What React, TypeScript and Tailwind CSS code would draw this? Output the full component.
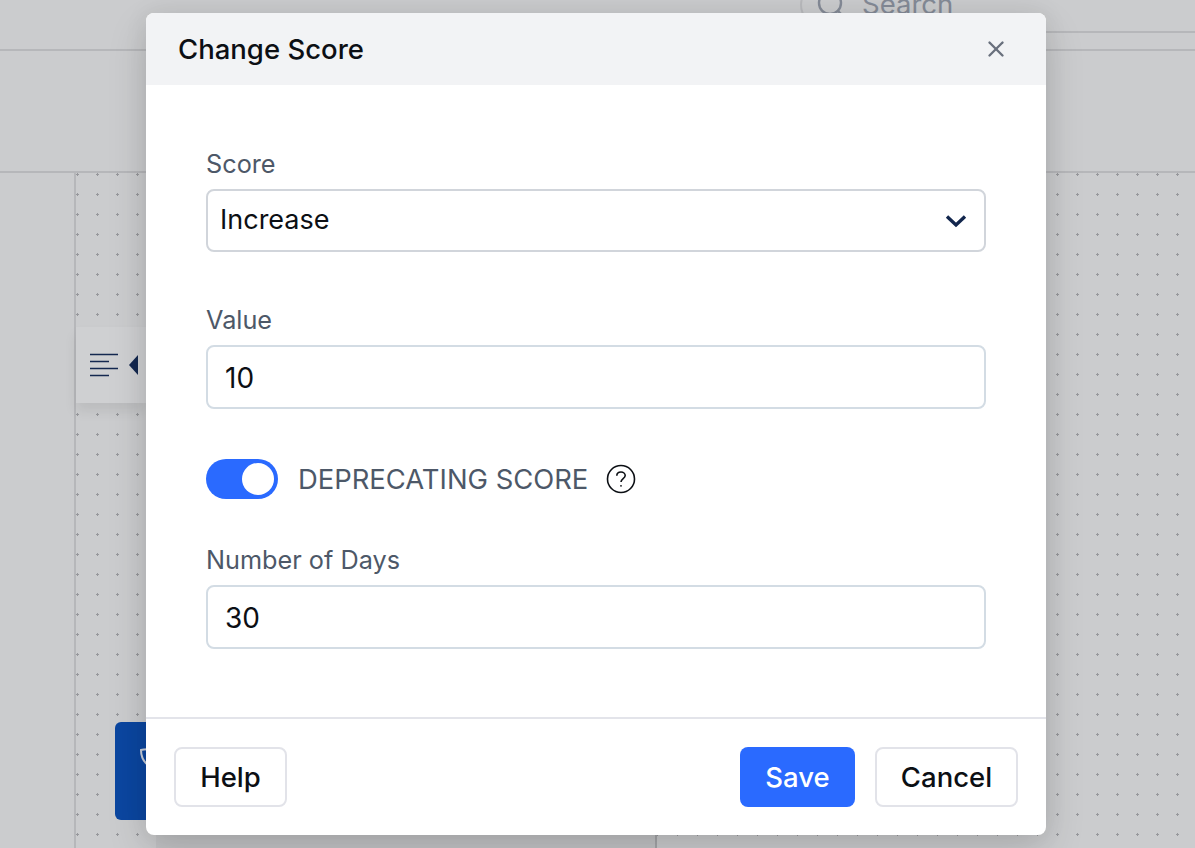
import React from "react";
import { X } from "lucide-react";

function Field({ label, value }: { label: string; value: string }) {
  return (
    <div className="flex flex-col">
      <label className="h-[34px] text-[25.25px] leading-[34px] text-[#4d5868]">{label}</label>
      <input
        readOnly
        defaultValue={value}
        className="mt-2 h-[64px] w-full rounded-lg border-2 border-[#d3dce4] bg-white pl-[17px] pt-[1px] text-[28px] text-[#0c0f14] outline-none"
      />
    </div>
  );
}

function OutlineButton({ label, width }: { label: string; width: string }) {
  return (
    <button className={`h-[60px] ${width} rounded-lg border-2 border-[#e2e3e9] bg-white pt-[1px] text-[27.5px] font-[450] text-[#0c0f14]`}>
      {label}
    </button>
  );
}

export default function App() {
  return (
    <div className="relative h-[848px] w-full overflow-hidden bg-[#cbccce] font-['Inter',sans-serif]">
      {/* page behind the dialog */}
      <div className="flex h-[848px] flex-col">
        <div className="h-[51px] shrink-0 border-b-2 border-[#b6b7ba]">
          <div className="ml-auto h-[33px] w-[395px] border-b-2 border-[#b6b7ba]" />
        </div>
        <div className="h-[122px] shrink-0 border-b-2 border-[#b6b7ba]" />
        <div className="flex min-h-0 flex-1">
          <div className="w-[76px] shrink-0 border-r-2 border-[#b6b7ba]" />
          <div className="relative flex-1 bg-[radial-gradient(circle_at_1.5px_1.5px,#97989c_1px,transparent_1.1px)] bg-[size:20px_20px]">
            <div className="mt-[154px] flex h-[76px] w-[70px] items-center gap-[10px] bg-[#cfd0d2] pl-[13px] shadow-[0_8px_12px_rgba(0,0,0,0.08)]">
              <svg width="30" height="24" viewBox="0 0 30 24" fill="none" stroke="#142850" strokeWidth="1.4">
                <path d="M1 1.5H29M1 8.5H20M1 15.5H29M1 22.5H20" />
              </svg>
              <svg width="9" height="20" viewBox="0 0 9 20" fill="#142850">
                <path d="M9 0V20L0 10Z" />
              </svg>
            </div>
            <div className="ml-[39px] mt-[319px] flex h-[98px] w-[90px] rounded-md bg-[#0b46a0] pl-[25px] pt-[26px]">
              <svg width="16" height="18" viewBox="0 0 16 18" fill="none" stroke="#c9cfdb" strokeWidth="2">
                <path d="M1 2C4 1 12 1 15 2C15 9 12 14 8 17C4 14 1 9 1 2Z" />
              </svg>
            </div>
          </div>
        </div>
      </div>

      {/* bottom panel edge peeking out under the dialog */}
      <div className="absolute left-[156px] top-[800px] h-[48px] w-[501px] border-r-2 border-[#a5a6a9] bg-[#c3c4c6]" />

      {/* search box clipped by the dialog */}
      <div className="absolute left-[800px] top-[-17px] flex h-[44px] w-[240px] items-center gap-[15px] rounded-l-full border-2 border-r-0 border-[#b9babd] pl-[15px] text-[#858b97]">
        <svg width="30" height="30" viewBox="0 0 30 30" fill="none" stroke="currentColor" strokeWidth="2.4">
          <circle cx="13" cy="13" r="11" />
          <path d="M21 21L29 29" />
        </svg>
        <span className="text-[27.5px]">Search</span>
      </div>

      {/* dialog */}
      <div className="absolute left-[146px] top-[13px] flex h-[822px] w-[900px] flex-col overflow-hidden rounded-lg bg-white shadow-[0_16px_40px_rgba(0,0,0,0.14),0_0_24px_rgba(0,0,0,0.07)]">
        <div className="flex h-[72px] shrink-0 items-center justify-between bg-[#f2f3f5] pl-[32px] pr-[37px]">
          <h2 className="pt-[2px] text-[27.5px] font-medium text-[#0c0f14]">Change Score</h2>
          <X size={26} strokeWidth={2.2} className="text-[#69707d]" />
        </div>

        <div className="flex-1 px-[60px] pt-[62px]">
          <div className="flex flex-col">
            <label className="h-[34px] text-[25.25px] leading-[34px] text-[#4d5868]">Score</label>
            <div className="relative mt-2 h-[63px] w-full">
              <select
                defaultValue="Increase"
                className="h-full w-full appearance-none rounded-lg border-2 border-[#d1d5db] bg-white pl-3 text-[27px] text-[#0c0f14] outline-none"
              >
                <option>Increase</option>
              </select>
              <svg
                className="absolute right-[19px] top-[25px]"
                width="22"
                height="14"
                viewBox="0 0 22 14"
                fill="none"
                stroke="#12264d"
                strokeWidth="3.4"
              >
                <path d="M2 2.5L11 11L20 2.5" />
              </svg>
            </div>
          </div>

          <div className="mt-[51px]">
            <Field label="Value" value="10" />
          </div>

          <div className="mt-[50px] flex h-[40px] items-center">
            <div className="flex h-[40px] w-[72px] items-center justify-end rounded-full bg-[#2a6aff] pr-1">
              <div className="h-8 w-8 rounded-full bg-white" />
            </div>
            <span className="ml-5 pt-[2px] text-[27.4px] text-[#4d5868]">DEPRECATING SCORE</span>
            <svg className="ml-[18px]" width="30" height="30" viewBox="0 0 30 30" fill="none" stroke="#0c0f14" strokeWidth="1.6">
              <circle cx="15" cy="15" r="13.5" />
              <path d="M10.8 11.8C10.8 9.4 12.7 8 15 8C17.3 8 19.2 9.5 19.2 11.6C19.2 14.6 15 14.8 15 18" />
              <circle cx="15" cy="21.8" r="0.9" fill="#0c0f14" stroke="none" />
            </svg>
          </div>

          <div className="mt-[44px]">
            <Field label="Number of Days" value="30" />
          </div>
        </div>

        <div className="flex h-[118px] shrink-0 items-center justify-between border-t-2 border-[#e3e4ea] pl-[28px] pr-[28px]">
          <OutlineButton label="Help" width="w-[113px]" />
          <div className="flex items-center gap-5">
            <button className="h-[60px] w-[115px] rounded-lg bg-[#2a6aff] pt-[1px] text-[27.5px] font-[450] text-white">Save</button>
            <OutlineButton label="Cancel" width="w-[143px]" />
          </div>
        </div>
      </div>
    </div>
  );
}
